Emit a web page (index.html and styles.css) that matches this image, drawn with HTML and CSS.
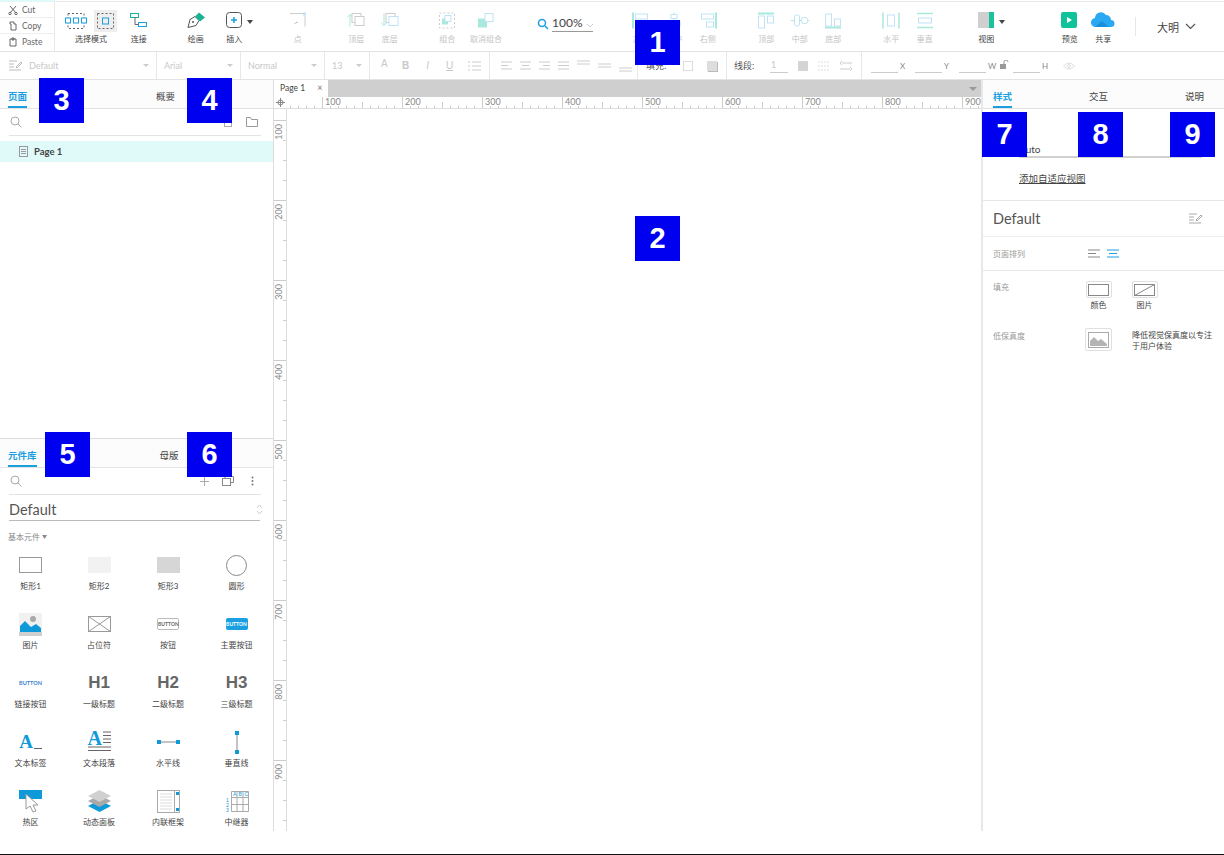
FILE: index.html
```html
<!DOCTYPE html>
<html lang="zh">
<head>
  <meta charset="UTF-8">
  <title>Axure RP</title>
  <link rel="stylesheet" href="styles.css">
</head>
<body>
<div class="app">

  <!-- main toolbar -->
  <div class="toolbar">
    <div class="clipboard">
      <div class="clip-row"><svg width="10" height="10" viewBox="0 0 10 10"><path d="M2 1l6 7M8 1L2 8" stroke="#666" fill="none"/><circle cx="2" cy="8.500" r="1.200" fill="none" stroke="#666"/><circle cx="8" cy="8.500" r="1.200" fill="none" stroke="#666"/></svg>Cut</div>
      <div class="clip-row"><svg width="10" height="10" viewBox="0 0 10 10"><path d="M2 1h4v2h2v6H3V3H2z" fill="none" stroke="#666"/></svg>Copy</div>
      <div class="clip-row"><svg width="10" height="10" viewBox="0 0 10 10"><path d="M2 2h6v7H2zM4 1h2v2H4z" fill="none" stroke="#666"/></svg>Paste</div>
    </div>

    <div class="tool tool-select">
      <div class="select-icons">
        <svg width="22" height="16" viewBox="0 0 22 16"><rect x="3" y="0.500" width="16" height="15" fill="none" stroke="#666" stroke-dasharray="2 2"/><g fill="#fff" stroke="#1a9fe0"><rect x="0.500" y="5" width="5" height="5"/><rect x="8.500" y="5" width="5" height="5"/><rect x="16.500" y="5" width="5" height="5"/></g></svg>
        <div class="select-on"><svg width="17" height="16" viewBox="0 0 17 16"><rect x="0.500" y="0.500" width="16" height="15" fill="none" stroke="#666" stroke-dasharray="2 2"/><rect x="5.500" y="5" width="6" height="6" fill="none" stroke="#1a9fe0"/></svg></div>
      </div>
      <span class="tool-label">选择模式</span>
    </div>
    <div class="tool tool-connect">
      <svg width="18" height="16" viewBox="0 0 18 16"><rect x="0.500" y="1" width="8" height="4" fill="none" stroke="#19b394"/><rect x="8.500" y="10" width="8" height="4" fill="none" stroke="#1a9fe0"/><path d="M5 5v7h3" fill="none" stroke="#666"/></svg>
      <span class="tool-label">连接</span>
    </div>

    <div class="tool tool-draw">
      <svg width="18" height="16" viewBox="0 0 18 16"><path d="M1 15l2-8 5-3 4 4-3 5z" fill="#fff" stroke="#555"/><path d="M8 4l4-4 6 5-5 4z" fill="#19b394"/><circle cx="6" cy="9.500" r="1" fill="#555"/></svg>
      <span class="tool-label">绘画</span>
    </div>
    <div class="tool tool-insert">
      <div class="insert-icon">
        <svg width="17" height="17" viewBox="0 0 17 17"><rect x="0.500" y="0.500" width="15" height="15" rx="3" fill="none" stroke="#555"/><path d="M8 5v6M5 8h6" stroke="#1a9fe0" stroke-width="1.500"/></svg>
        <i class="caret"></i>
      </div>
      <span class="tool-label">插入</span>
    </div>

    <div class="tool off tool-point">
      <svg width="18" height="16" viewBox="0 0 18 16"><path d="M1 1h13M16 3v11" stroke="#ccc" fill="none"/><rect x="14" y="0" width="3" height="3" fill="#bfe3f5"/><path d="M4 12l5-2-1-1z" fill="#bbb"/></svg>
      <span class="tool-label">点</span>
    </div>

    <div class="tool off tool-first">
      <svg width="18" height="16" viewBox="0 0 18 16"><path d="M3 14V2M0 5l3-3 3 3" fill="none" stroke="#a9e9dc"/><rect x="5" y="1" width="9" height="9" fill="#fff" stroke="#ccc"/><rect x="8" y="4" width="9" height="9" fill="#fff" stroke="#ccc"/></svg>
      <span class="tool-label">顶层</span>
    </div>
    <div class="tool off">
      <svg width="18" height="16" viewBox="0 0 18 16"><rect x="5" y="1" width="9" height="9" fill="#fff" stroke="#ccc"/><rect x="8" y="4" width="9" height="9" fill="#fff" stroke="#bfe3f5"/><path d="M3 1v12M0 10l3 3 3-3" fill="none" stroke="#a9e9dc"/></svg>
      <span class="tool-label">底层</span>
    </div>

    <div class="tool off tool-group">
      <svg width="16" height="16" viewBox="0 0 16 16"><rect x="0.500" y="0.500" width="15" height="15" fill="none" stroke="#ccc" stroke-dasharray="2 2"/><rect x="3" y="6" width="6" height="6" fill="#a9e9dc"/><rect x="6" y="3" width="6" height="6" fill="#fff" stroke="#bfe3f5"/></svg>
      <span class="tool-label">组合</span>
    </div>
    <div class="tool off tool-wide">
      <svg width="16" height="16" viewBox="0 0 16 16"><rect x="0" y="6" width="9" height="9" fill="#a9e9dc"/><rect x="7" y="1" width="8" height="8" fill="#fff" stroke="#bfe3f5"/></svg>
      <span class="tool-label">取消组合</span>
    </div>

    <div class="zoom-box">
      <svg width="12" height="12" viewBox="0 0 12 12"><circle cx="5" cy="5" r="3.500" fill="none" stroke="#1a9fe0" stroke-width="1.500"/><path d="M8 8l3 3" stroke="#1a9fe0" stroke-width="1.500"/></svg>
      <div class="zoom-value">100%</div>
      <svg width="8" height="5" viewBox="0 0 8 5"><path d="M1 1l3 3 3-3" fill="none" stroke="#ccc"/></svg>
    </div>

    <div class="tool off tool-align-l">
      <svg width="18" height="16" viewBox="0 0 18 16"><path d="M1 0v16" stroke="#a9e9dc" stroke-width="2"/><rect x="3.500" y="1.500" width="12" height="5" fill="none" stroke="#bfe3f5"/><rect x="3.500" y="9.500" width="7" height="5" fill="none" stroke="#bfe3f5"/></svg>
      <span class="tool-label">左侧</span>
    </div>
    <div class="tool off">
      <svg width="18" height="16" viewBox="0 0 18 16"><path d="M9 0v16" stroke="#a9e9dc"/><rect x="6" y="2" width="6" height="4" fill="#fff" stroke="#bfe3f5"/><rect x="3" y="9" width="12" height="5" fill="#fff" stroke="#bfe3f5"/></svg>
      <span class="tool-label">居中</span>
    </div>
    <div class="tool off">
      <svg width="18" height="16" viewBox="0 0 18 16"><path d="M17 0v16" stroke="#a9e9dc" stroke-width="2"/><rect x="2.500" y="1.500" width="12" height="5" fill="none" stroke="#bfe3f5"/><rect x="7.500" y="9.500" width="7" height="5" fill="none" stroke="#bfe3f5"/></svg>
      <span class="tool-label">右侧</span>
    </div>

    <div class="tool off tool-align-t">
      <svg width="18" height="16" viewBox="0 0 18 16"><path d="M1 1h16" stroke="#a9e9dc" stroke-width="2"/><rect x="1.500" y="3.500" width="6" height="12" fill="none" stroke="#bfe3f5"/><rect x="10.500" y="3.500" width="6" height="7" fill="none" stroke="#bfe3f5"/></svg>
      <span class="tool-label">顶部</span>
    </div>
    <div class="tool off">
      <svg width="18" height="16" viewBox="0 0 18 16"><path d="M0 8h18" stroke="#a9e9dc"/><rect x="3.500" y="2.500" width="5" height="11" rx="2" fill="#fff" stroke="#bfe3f5"/><rect x="10.500" y="5" width="6" height="6" rx="2" fill="#fff" stroke="#bfe3f5"/></svg>
      <span class="tool-label">中部</span>
    </div>
    <div class="tool off">
      <svg width="18" height="16" viewBox="0 0 18 16"><path d="M1 15h16" stroke="#a9e9dc" stroke-width="2"/><rect x="1.500" y="1.500" width="6" height="12" fill="none" stroke="#bfe3f5"/><rect x="10.500" y="6.500" width="6" height="7" fill="none" stroke="#bfe3f5"/></svg>
      <span class="tool-label">底部</span>
    </div>

    <div class="tool off tool-dist">
      <svg width="18" height="16" viewBox="0 0 18 16"><path d="M1 0v16M17 0v16" stroke="#a9e9dc" stroke-width="1.500"/><rect x="5.500" y="2.500" width="7" height="11" fill="none" stroke="#bfe3f5"/></svg>
      <span class="tool-label">水平</span>
    </div>
    <div class="tool off">
      <svg width="18" height="16" viewBox="0 0 18 16"><path d="M1 1h16M1 15h16" stroke="#a9e9dc" stroke-width="1.500"/><rect x="2.500" y="5.500" width="13" height="5" fill="none" stroke="#bfe3f5"/></svg>
      <span class="tool-label">垂直</span>
    </div>

    <div class="tool tool-view">
      <div class="insert-icon">
        <svg width="17" height="16" viewBox="0 0 17 16"><rect width="11" height="16" fill="#cfcfcf"/><rect x="11" width="5" height="16" fill="#19c29b"/></svg>
        <i class="caret"></i>
      </div>
      <span class="tool-label">视图</span>
    </div>

    <div class="tool tool-preview">
      <svg width="17" height="17" viewBox="0 0 17 17"><rect width="16" height="16" rx="2" fill="#0fc29a"/><path d="M6 5l5 3-5 3z" fill="#fff"/></svg>
      <span class="tool-label">预览</span>
    </div>
    <div class="tool">
      <svg width="24" height="17" viewBox="0 0 24 17"><path d="M5 15a4.500 4.500 0 0 1-1-9 6 6 0 0 1 11-3 5 5 0 0 1 5 5 3.500 3.500 0 0 1 0 7z" fill="#2aa9f2"/><path d="M4 15l7-6 7 6z" fill="#1a8fdc"/></svg>
      <span class="tool-label">共享</span>
    </div>

    <div class="user-box">
      <span>大明</span>
      <svg width="11" height="7" viewBox="0 0 11 7"><path d="M1 1l4.500 4.500L10 1" fill="none" stroke="#555" stroke-width="1.200"/></svg>
    </div>
  </div>

  <!-- format bar -->
  <div class="formatbar">
    <div class="fmt fmt-style">
      <svg width="13" height="11" viewBox="0 0 13 11"><path d="M0 1h8M0 4h5M0 7h5M0 10h12M7 7l5-5 1 1-5 5z" fill="none" stroke="#bbb"/></svg>
      <span class="fmt-text">Default</span><i class="mini-caret"></i>
    </div>
    <div class="fmt fmt-font"><span class="fmt-text">Arial</span><i class="mini-caret"></i></div>
    <div class="fmt fmt-weight"><span class="fmt-text">Normal</span><i class="mini-caret"></i></div>
    <div class="fmt fmt-size"><span class="fmt-text">13</span><i class="mini-caret"></i></div>
    <div class="fmt fmt-letters">
      <span>A</span><b>B</b><em>I</em><u>U</u>
      <svg width="13" height="10" viewBox="0 0 13 10"><path d="M0 1h2M4 1h9M0 5h2M4 5h9M0 9h2M4 9h9" stroke="#ccc"/></svg>
    </div>
    <div class="fmt fmt-aligns">
      <svg width="11" height="9" viewBox="0 0 11 9"><path d="M0 1h11M0 4.500h7M0 8h11" stroke="#ccc"/></svg>
      <svg width="11" height="9" viewBox="0 0 11 9"><path d="M0 1h11M2 4.500h7M0 8h11" stroke="#ccc"/></svg>
      <svg width="11" height="9" viewBox="0 0 11 9"><path d="M0 1h11M4 4.500h7M0 8h11" stroke="#ccc"/></svg>
      <svg width="11" height="9" viewBox="0 0 11 9"><path d="M0 1h11M0 4.500h11M0 8h11" stroke="#ccc"/></svg>
      <svg class="valign-t" width="13" height="5" viewBox="0 0 13 5"><path d="M0 1h13M0 4h13" stroke="#ccc"/></svg>
      <svg width="13" height="5" viewBox="0 0 13 5"><path d="M0 1h13M0 4h13" stroke="#ccc"/></svg>
      <svg class="valign-b" width="13" height="5" viewBox="0 0 13 5"><path d="M0 1h13M0 4h13" stroke="#ccc"/></svg>
    </div>
    <div class="fmt fmt-fill">
      <span class="fmt-label">填充:</span>
      <i class="swatch"></i>
      <i class="swatch swatch-shadow"></i>
    </div>
    <div class="fmt fmt-line">
      <span class="fmt-label">线段:</span>
      <span class="line-value">1</span>
      <i class="swatch swatch-solid"></i>
      <svg width="12" height="10" viewBox="0 0 12 10"><path d="M0 1h12M0 5h12M0 9h12" stroke="#ddd" stroke-dasharray="2 1"/></svg>
      <svg width="12" height="10" viewBox="0 0 12 10"><path d="M2 2h10M0 2l2-2M0 2l2 2M0 8h10M12 8l-2-2M12 8l-2 2" fill="none" stroke="#ccc"/></svg>
    </div>
    <div class="fmt fmt-pos">
      <span class="pos-line"></span><span class="pos-key">X</span>
      <span class="pos-line"></span><span class="pos-key">Y</span>
      <span class="pos-line"></span><span class="pos-key pos-key-w">W</span>
      <svg class="lock" width="9" height="9" viewBox="0 0 9 9"><rect y="4" width="6" height="5" fill="#999"/><path d="M4 4V2a2 2 0 0 1 4 0" fill="none" stroke="#999"/></svg>
      <span class="pos-line"></span><span class="pos-key pos-key-h">H</span>
      <svg class="eye" width="12" height="8" viewBox="0 0 12 8"><path d="M0.500 4Q6-2 11.500 4 6 10 0.500 4z" fill="none" stroke="#ddd"/><circle cx="6" cy="4" r="1.500" fill="none" stroke="#ddd"/></svg>
    </div>
  </div>

  <div class="main">

    <!-- left column -->
    <div class="left">
      <div class="pages">
        <div class="tabs">
          <span class="tab active">页面</span>
          <span class="tab tab-outline">概要</span>
        </div>
        <div class="search-row">
          <svg width="12" height="12" viewBox="0 0 12 12"><circle cx="5" cy="5" r="4" fill="none" stroke="#aaa"/><path d="M8 8l3.500 3.500" stroke="#aaa"/></svg>
          <span class="search-space"></span>
          <svg width="8" height="12" viewBox="0 0 8 12"><rect x="0.500" y="1.500" width="7" height="9" fill="none" stroke="#aaa"/></svg>
          <svg class="folder" width="12" height="10" viewBox="0 0 12 10"><path d="M0.500 9.500V0.500h4l1 2h6v7z" fill="none" stroke="#999"/></svg>
        </div>
        <div class="page-row">
          <svg width="9" height="11" viewBox="0 0 9 11"><rect x="0.500" y="0.500" width="8" height="10" fill="none" stroke="#999"/><path d="M2 3.500h5M2 5.500h5M2 7.500h5" stroke="#999"/></svg>
          Page 1
        </div>
      </div>

      <div class="library">
        <div class="tabs">
          <span class="tab active">元件库</span>
          <span class="tab tab-masters">母版</span>
        </div>
        <div class="search-row search-lib">
          <svg width="12" height="12" viewBox="0 0 12 12"><circle cx="5" cy="5" r="4" fill="none" stroke="#aaa"/><path d="M8 8l3.500 3.500" stroke="#aaa"/></svg>
          <span class="search-space"></span>
          <svg width="9" height="9" viewBox="0 0 9 9"><path d="M4.500 0v9M0 4.500h9" stroke="#aaa"/></svg>
          <svg class="lib-copy" width="12" height="10" viewBox="0 0 12 10"><rect x="0.500" y="2.500" width="8" height="7" fill="#fff" stroke="#888"/><path d="M3 2.500v-2h8.500v6h-3" fill="none" stroke="#888"/></svg>
          <svg class="lib-more" width="3" height="10" viewBox="0 0 3 10"><circle cx="1.500" cy="1.500" r="1" fill="#777"/><circle cx="1.500" cy="5" r="1" fill="#777"/><circle cx="1.500" cy="8.500" r="1" fill="#777"/></svg>
        </div>
        <div class="lib-select">
          <span>Default</span>
          <svg width="7" height="13" viewBox="0 0 7 13"><path d="M1 5l2.500-3L6 5M1 8l2.500 3L6 8" fill="none" stroke="#ccc"/></svg>
        </div>
        <div class="lib-section">基本元件 <i>▼</i></div>
        <div class="widgets">
          <div class="widget"><div class="w-icon"><span class="rect-a"></span></div><span>矩形1</span></div>
          <div class="widget"><div class="w-icon"><span class="rect-b"></span></div><span>矩形2</span></div>
          <div class="widget"><div class="w-icon"><span class="rect-c"></span></div><span>矩形3</span></div>
          <div class="widget"><div class="w-icon"><span class="circle"></span></div><span>圆形</span></div>

          <div class="widget"><div class="w-icon">
            <svg width="23" height="23" viewBox="0 0 23 23"><rect width="23" height="23" fill="#f1f1f1"/><circle cx="14" cy="6" r="3" fill="#aaa"/><path d="M1 19v-6l5-5 6 6 5-3 5 4v4z" fill="#0e9ad9"/><rect y="19" width="23" height="4" fill="#d0d0d0"/></svg>
          </div><span>图片</span></div>
          <div class="widget"><div class="w-icon">
            <svg width="23" height="16" viewBox="0 0 23 16"><rect x="0.500" y="0.500" width="22" height="15" fill="none" stroke="#999"/><path d="M0.500 0.500l22 15M22.500 0.500l-22 15" stroke="#999"/></svg>
          </div><span>占位符</span></div>
          <div class="widget"><div class="w-icon"><span class="btn-a">BUTTON</span></div><span>按钮</span></div>
          <div class="widget"><div class="w-icon"><span class="btn-b">BUTTON</span></div><span>主要按钮</span></div>

          <div class="widget"><div class="w-icon"><span class="btn-c">BUTTON</span></div><span>链接按钮</span></div>
          <div class="widget"><div class="w-icon"><span class="w-head">H1</span></div><span>一级标题</span></div>
          <div class="widget"><div class="w-icon"><span class="w-head">H2</span></div><span>二级标题</span></div>
          <div class="widget"><div class="w-icon"><span class="w-head">H3</span></div><span>三级标题</span></div>

          <div class="widget"><div class="w-icon"><span class="w-label">A<i></i></span></div><span>文本标签</span></div>
          <div class="widget"><div class="w-icon"><div class="w-para"><b>A</b><svg width="23" height="23" viewBox="0 0 23 23"><path d="M15 1h8M15 4.500h8M15 8h8M15 11.500h8M0 16h23M0 19.500h23" stroke="#666" stroke-width="1.200"/></svg></div></div><span>文本段落</span></div>
          <div class="widget"><div class="w-icon">
            <svg width="23" height="6" viewBox="0 0 23 6"><path d="M3 3h18" stroke="#888"/><rect width="4" height="4" y="1" fill="#0e9ad9"/><rect x="19" y="1" width="4" height="4" fill="#0e9ad9"/></svg>
          </div><span>水平线</span></div>
          <div class="widget"><div class="w-icon">
            <svg width="6" height="23" viewBox="0 0 6 23"><path d="M3 3v18" stroke="#888"/><rect x="1" width="4" height="4" fill="#0e9ad9"/><rect x="1" y="19" width="4" height="4" fill="#0e9ad9"/></svg>
          </div><span>垂直线</span></div>

          <div class="widget"><div class="w-icon">
            <svg width="23" height="23" viewBox="0 0 23 23"><rect width="23" height="9" fill="#0e9ad9"/><path d="M7 4v15l4-3 3 6 3-1-3-6h5z" fill="#fff" stroke="#999"/></svg>
          </div><span>热区</span></div>
          <div class="widget"><div class="w-icon">
            <svg width="23" height="23" viewBox="0 0 23 23"><path d="M0 16l11.500-6L23 16l-11.500 6z" fill="#0e9ad9"/><path d="M0 11l11.500-6L23 11l-11.500 6z" fill="#a8a8a8"/><path d="M0 6l11.500-6L23 6l-11.500 6z" fill="#d0d0d0"/></svg>
          </div><span>动态面板</span></div>
          <div class="widget"><div class="w-icon">
            <svg width="23" height="23" viewBox="0 0 23 23"><rect x="0.500" y="0.500" width="22" height="22" fill="#fff" stroke="#aaa"/><path d="M3 4h12M3 7h12M3 10h12M3 13h12M3 16h12M3 19h12" stroke="#ddd"/><path d="M17.500 0.500v22" stroke="#aaa"/><rect x="19" y="2" width="3" height="3" fill="#0e9ad9"/><rect x="19" y="18" width="3" height="3" fill="#0e9ad9"/></svg>
          </div><span>内联框架</span></div>
          <div class="widget"><div class="w-icon">
            <svg width="24" height="23" viewBox="0 0 24 23"><path d="M6.500 1.500h17v20h-17zM6.500 7.500h17M6.500 14.500h17M12 1.500v20M18 1.500v20" fill="none" stroke="#aaa"/><g font-size="5" font-family="Liberation Sans" fill="#0e9ad9"><text x="8" y="6">A</text><text x="13.500" y="6">B</text><text x="19.500" y="6">C</text><text x="1" y="12">1</text><text x="1" y="17">2</text><text x="1" y="22">3</text></g></svg>
          </div><span>中继器</span></div>
        </div>
      </div>
    </div>

    <!-- canvas with rulers -->
    <div class="center">
      <div class="doc-tabs">
        <div class="doc-tab">Page 1 <span class="doc-close">×</span></div>
        <i class="doc-arrow"></i>
      </div>
      <div class="ruler-h">
        <div class="ruler-corner">
          <svg width="9" height="9" viewBox="0 0 9 9"><circle cx="4.500" cy="4.500" r="2.500" fill="none" stroke="#888"/><path d="M4.500 0v9M0 4.500h9" stroke="#888"/></svg>
        </div>
        <div class="ruler-h-track">
          <span>100</span><span>200</span><span>300</span><span>400</span><span>500</span><span>600</span><span>700</span><span>800</span><span>900</span>
        </div>
      </div>
      <div class="canvas-row">
        <div class="ruler-v">
          <span><b>100</b></span><span><b>200</b></span><span><b>300</b></span><span><b>400</b></span><span><b>500</b></span><span><b>600</b></span><span><b>700</b></span><span><b>800</b></span><span><b>900</b></span>
        </div>
        <div class="canvas"></div>
      </div>
    </div>

    <!-- right column -->
    <div class="right">
      <div class="tabs tabs-right">
        <span class="tab active">样式</span>
        <span class="tab">交互</span>
        <span class="tab">说明</span>
      </div>
      <div class="adaptive">
        <div class="adaptive-value">Auto</div>
        <a class="adaptive-link">添加自适应视图</a>
      </div>
      <div class="style-head">
        <span>Default</span>
        <svg width="13" height="11" viewBox="0 0 13 11"><path d="M0 1h8M0 4h5M0 7h5M0 10h12M7 7l5-5 1 1-5 5z" fill="none" stroke="#aaa"/></svg>
      </div>
      <div class="prop prop-arrange">
        <span class="prop-name">页面排列</span>
        <div class="arrange-icons">
          <svg width="12" height="9" viewBox="0 0 12 9"><path d="M0 1h12M0 4.500h8M0 8h12" stroke="#888"/></svg>
          <svg width="12" height="9" viewBox="0 0 12 9"><path d="M0 1h12M2 4.500h8M0 8h12" stroke="#1a9fe0"/></svg>
        </div>
      </div>
      <div class="prop-fill">
        <div class="fill-row">
          <span class="prop-name">填充</span>
          <div class="fill-opt">
            <div class="fill-box"><span></span></div>
            <small>颜色</small>
          </div>
          <div class="fill-opt">
            <div class="fill-box"><svg width="21" height="12" viewBox="0 0 21 12"><rect x="0.500" y="0.500" width="20" height="11" fill="none" stroke="#888"/><path d="M0.500 11.500l20-11" stroke="#888"/></svg></div>
            <small>图片</small>
          </div>
        </div>
        <div class="fill-row fidelity">
          <span class="prop-name">低保真度</span>
          <div class="fid-box"><svg width="21" height="16" viewBox="0 0 21 16"><rect x="0.500" y="0.500" width="20" height="15" fill="#fff" stroke="#aaa"/><path d="M2 14V9l4-4 4 4 3-2 6 5v2z" fill="#b4b4b4"/></svg></div>
          <p>降低视觉保真度以专注于用户体验</p>
        </div>
      </div>
    </div>
  </div>

  <div class="statusbar"></div>

  <!-- numbered callouts -->
  <div class="badge b1">1</div>
  <div class="badge b2">2</div>
  <div class="badge b3">3</div>
  <div class="badge b4">4</div>
  <div class="badge b5">5</div>
  <div class="badge b6">6</div>
  <div class="badge b7">7</div>
  <div class="badge b8">8</div>
  <div class="badge b9">9</div>
</div>
</body>
</html>
```

FILE: styles.css
```css
* {
  box-sizing: border-box;
}

body {
  margin: 0;
  background: #fff;
  color: #444;
  font-family: "Lato", "Noto Sans CJK SC", sans-serif;
  font-size: 9px;
}

.app {
  position: relative;
  width: 1224px;
  height: 855px;
  display: flex;
  flex-direction: column;
  overflow: hidden;
}

svg {
  display: block;
  flex: none;
}

/* toolbar */
.toolbar {
  height: 52px;
  display: flex;
  border-bottom: 1px solid #e3e3e3;
  background: linear-gradient(#e8e8e8 0 1px, transparent 1px) no-repeat 48px 1px;
}

.clipboard {
  width: 55px;
  border-right: 1px solid #e8e8e8;
  margin-right: 5px;
  border-top: 2px solid #e0f9f9;
}

.clip-row {
  height: 16px;
  display: flex;
  align-items: center;
  gap: 4px;
  padding-left: 8px;
  border-bottom: 1px solid #eee;
  color: #666;
  font-size: 8.500px;
}

.clip-row:last-child {
  border-bottom: 0;
}

.tool {
  width: 33.500px;
  display: flex;
  flex-direction: column;
  align-items: center;
  padding-top: 12px;
  flex: none;
}

.insert-icon {
  height: 21px;
}

.tool > svg {
  margin-bottom: 4px;
  height: 17px;
}

.tool-label {
  font-size: 8px;
  line-height: 12px;
  white-space: nowrap;
  color: #444;
}

.off .tool-label {
  color: #c4c4c4;
}

.tool-select {
  width: 62px;
  padding-top: 9px;
}

.select-icons {
  display: flex;
  align-items: center;
  gap: 7px;
  height: 24px;
}

.select-on {
  width: 23px;
  height: 22px;
  background: #eee;
  display: flex;
  align-items: center;
  justify-content: center;
}

.tool-draw {
  margin-left: 23.500px;
}

.tool-insert {
  margin-left: 5px;
}

.insert-icon {
  display: flex;
  gap: 4px;
  margin-left: 11px;
}

.caret {
  width: 0;
  height: 0;
  margin-top: 8px;
  border: 3px solid transparent;
  border-top: 4px solid #444;
  border-bottom: 0;
}

.tool-point {
  margin-left: 30px;
}

.tool-first {
  margin-left: 25px;
}

.tool-group {
  margin-left: 24px;
}

.tool-wide {
  width: 44px;
}

.zoom-box {
  width: 64px;
  margin-left: 29px;
  padding-top: 14px;
  display: flex;
  align-items: flex-start;
  gap: 3px;
  height: 32px;
}

.zoom-box svg:first-child {
  margin-top: 4px;
}

.zoom-box svg:last-child {
  margin: 9px 0 0 -10px;
}

.zoom-value {
  width: 41px;
  font-size: 12px;
  line-height: 17px;
  border-bottom: 1px solid #999;
}

.tool-align-l {
  margin-left: 23px;
}

.tool-align-t {
  margin-left: 25px;
}

.tool-dist {
  margin-left: 24.500px;
}

.tool-view {
  margin-left: 28px;
}

.tool-preview {
  margin-left: 50px;
}

.user-box {
  margin-left: 15px;
  margin-top: 17px;
  height: 19px;
  width: 66px;
  border-left: 1px solid #e6e6e6;
  padding-left: 21px;
  display: flex;
  align-items: center;
  gap: 6px;
  font-size: 11px;
}

/* format bar */
.formatbar {
  height: 28px;
  display: flex;
  border-bottom: 1px solid #e3e3e3;
  color: #c8c8c8;
}

.fmt {
  height: 27px;
  display: flex;
  align-items: center;
  border-right: 1px solid #e8e8e8;
  flex: none;
  position: relative;
  font-size: 9px;
}

.fmt-style {
  width: 157px;
  padding-left: 9px;
}

.fmt-text {
  flex: 1;
}

.fmt-style .fmt-text {
  margin-left: 7px;
}

.fmt-font {
  width: 84px;
  padding-left: 7px;
}

.fmt-weight {
  width: 84px;
  padding-left: 7px;
}

.fmt-size {
  width: 45px;
  padding-left: 7px;
}

.mini-caret {
  width: 0;
  height: 0;
  margin-right: 7px;
  border: 3px solid transparent;
  border-top: 3px solid #ccc;
  border-bottom: 0;
}

.fmt-letters {
  width: 120px;
  padding-left: 11px;
  gap: 14px;
  font-family: "Liberation Sans", sans-serif;
  font-size: 10px;
}

.fmt-letters span {
  margin-top: -4px;
}

.fmt-letters b,
.fmt-letters em,
.fmt-letters u {
  width: 8px;
  text-align: center;
}

.fmt-aligns {
  width: 148px;
  padding-left: 11px;
  gap: 8px;
}

.valign-t {
  margin-top: -7px;
}

.valign-b {
  margin-top: 7px;
}

.fmt-fill {
  width: 89px;
  padding-left: 8px;
  gap: 14px;
}

.fmt-label {
  color: #555;
  width: 24px;
  margin-right: -1px;
}

.swatch {
  width: 10px;
  height: 10px;
  border: 1px solid #ddd;
}

.swatch-shadow {
  background: #ddd;
  box-shadow: 1px 1px 0 #bbb;
}

.swatch-solid {
  background: #d4d4d4;
  border: 0;
  margin: 0 10px;
}

.fmt-line {
  width: 135px;
  padding-left: 7px;
}

.line-value {
  width: 18px;
  margin-left: 13px;
  padding-left: 1px;
  line-height: 14px;
  border-bottom: 1px solid #ccc;
}

.fmt-line svg:last-child {
  margin-left: 10px;
}

.fmt-pos {
  border-right: 0;
  flex: 1;
  padding-left: 9px;
}

.pos-line {
  width: 27px;
  height: 14px;
  border-bottom: 1px solid #ccc;
}

.pos-key {
  width: 17px;
  padding-left: 2px;
  font-size: 8px;
  color: #888;
}

.pos-key-w {
  width: 12px;
}

.lock {
  margin: -3px 4px 0 2px;
}

.eye {
  margin-left: 6px;
}

/* panels */
.main {
  height: 751px;
  display: flex;
}

.left {
  width: 274px;
  display: flex;
  flex-direction: column;
  border-right: 1px solid #ddd;
  flex: none;
}

.pages {
  height: 358px;
}

.tabs {
  position: relative;
  height: 29px;
  display: flex;
  border-bottom: 1px solid #e3e3e3;
  background: #fcfcfc;
  padding-left: 8px;
  font-size: 9.500px;
}

.tab {
  height: 28px;
  line-height: 34px;
  color: #444;
}

.tab.active {
  color: #1a9fe0;
  font-weight: 700;
  border-bottom: 2px solid #1a9fe0;
}

.tab-outline {
  margin-left: 129px;
}

.tab-masters {
  margin-left: 123px;
}

.search-row {
  height: 27px;
  margin: 0 12px 0 9px;
  display: flex;
  align-items: center;
  border-bottom: 1px solid #e3e3e3;
  padding: 0 3px 0 1px;
}

.search-space {
  flex: 1;
}

.folder {
  margin-left: 14px;
}

.lib-copy {
  margin-left: 13px;
}

.lib-more {
  margin: 0 4px 0 17px;
}

.page-row {
  height: 21px;
  margin-top: 5px;
  background: #e0f9f9;
  display: flex;
  align-items: center;
  gap: 6px;
  padding-left: 19px;
  font-size: 9.500px;
  font-weight: 700;
  color: #444;
}

.library {
  flex: 1;
  border-top: 1px solid #ddd;
  overflow: hidden;
}

.lib-select {
  height: 22px;
  margin: 4px 13px 0 9px;
  display: flex;
  align-items: center;
  justify-content: space-between;
  border-bottom: 1px solid #bbb;
  font-size: 14.500px;
  color: #555;
}

.lib-select svg {
  margin-right: -3px;
}

.lib-section {
  margin: 9px 0 0 8px;
  color: #888;
  font-size: 8px;
  line-height: 12px;
}

.lib-section i {
  font-style: normal;
  font-size: 5px;
  vertical-align: 2px;
}

.widgets {
  display: grid;
  grid-template-columns: 68px 69px 69px 68px;
  grid-auto-rows: 59px;
  margin: 7px 0 0 -3.500px;
}

.widget {
  display: flex;
  flex-direction: column;
  align-items: center;
}

.widget > span {
  font-size: 8px;
  line-height: 12px;
  color: #444;
  white-space: nowrap;
}

.w-icon {
  height: 30px;
  display: flex;
  align-items: center;
  justify-content: center;
}

.rect-a {
  width: 23px;
  height: 16px;
  border: 1px solid #999;
}

.rect-b {
  width: 23px;
  height: 16px;
  background: #f2f2f2;
}

.rect-c {
  width: 23px;
  height: 16px;
  background: #d6d6d6;
}

.circle {
  width: 21px;
  height: 21px;
  border: 1px solid #888;
  border-radius: 50%;
}

.btn-a,
.btn-b {
  width: 22px;
  height: 12px;
  font-size: 5px;
  font-weight: 700;
  line-height: 11px;
  text-align: center;
  border-radius: 2px;
}

.btn-a {
  border: 1px solid #bbb;
  color: #666;
}

.btn-b {
  background: #1a9fe0;
  color: #fff;
  line-height: 12px;
}

.btn-c {
  font-size: 5.500px;
  font-weight: 700;
  color: #3b7fd0;
}

.w-head {
  font-family: "Liberation Sans", sans-serif;
  font-size: 17px;
  font-weight: 700;
  color: #666;
}

.w-label {
  display: flex;
  align-items: flex-end;
  font-family: "Liberation Serif", serif;
  font-size: 19px;
  font-weight: 700;
  line-height: 18px;
  color: #0e9ad9;
}

.w-label i {
  width: 8px;
  height: 1px;
  margin: 0 0 2px 1px;
  background: #666;
}

.w-para {
  position: relative;
  width: 23px;
  height: 23px;
}

.w-para b {
  position: absolute;
  left: 0;
  top: -3px;
  font-family: "Liberation Serif", serif;
  font-size: 20px;
  line-height: 20px;
  color: #0e9ad9;
}

.center {
  width: 707px;
  display: flex;
  flex-direction: column;
  flex: none;
}

.doc-tabs {
  height: 17px;
  background: #cfcfcf;
  display: flex;
  align-items: center;
  justify-content: space-between;
  padding-right: 4px;
}

.doc-tab {
  width: 54px;
  height: 17px;
  background: #fff;
  padding-left: 6px;
  font-size: 8.500px;
  line-height: 16px;
  color: #444;
  white-space: nowrap;
}

.doc-close {
  margin-left: 10px;
  color: #777;
  font-size: 9px;
}

.doc-arrow {
  width: 0;
  height: 0;
  border: 4px solid transparent;
  border-top: 4px solid #999;
  border-bottom: 0;
}

.ruler-h {
  height: 12px;
  display: flex;
  border-bottom: 1px solid #ddd;
}

.ruler-corner {
  width: 13px;
  display: flex;
  align-items: center;
  justify-content: center;
  flex: none;
}

.ruler-h-track {
  flex: 1;
  display: flex;
  padding-left: 35px;
  overflow: hidden;
  background-image:
    repeating-linear-gradient(90deg, #ccc 0 1px, transparent 1px 80px),
    repeating-linear-gradient(90deg, #ccc 0 1px, transparent 1px 8px);
  background-size: calc(100% + 80px) 6px, calc(100% + 8px) 2px;
  background-position: -5px 100%, -5px 100%;
  background-repeat: no-repeat;
}

.ruler-h-track span {
  width: 80px;
  flex: none;
  border-left: 1px solid #ccc;
  padding-left: 2px;
  font-size: 9px;
  line-height: 10px;
  color: #888;
}

.canvas-row {
  flex: 1;
  display: flex;
  min-height: 0;
}

.ruler-v {
  width: 13px;
  flex: none;
  padding-top: 11px;
  overflow: hidden;
  border-right: 1px solid #ddd;
  background-image: repeating-linear-gradient(180deg, #ccc 0 1px, transparent 1px 20px);
  background-size: 3px calc(100% + 20px);
  background-repeat: no-repeat;
  background-position: 100% -9px;
}

.ruler-v span {
  display: block;
  height: 80px;
  width: 12px;
  border-top: 1px solid #ccc;
}

.ruler-v b {
  display: block;
  margin-top: 3px;
  writing-mode: vertical-rl;
  transform: rotate(180deg);
  font-weight: 400;
  font-size: 9px;
  line-height: 10px;
  color: #888;
}

.canvas {
  flex: 1;
  background: #fff;
}

/* right panel */
.right {
  flex: 1;
  border-left: 2px solid #e8e8e8;
  min-width: 0;
}

.tabs-right {
  justify-content: space-between;
  padding: 0 20px 0 10px;
}

.adaptive {
  height: 92px;
  border-bottom: 1px solid #e6e6e6;
  padding: 31px 0 0 36px;
}

.adaptive-value {
  width: 183px;
  height: 18px;
  border-bottom: 2px solid #d0d0d0;
  font-size: 10px;
  line-height: 19px;
  color: #444;
}

.adaptive-link {
  display: inline-block;
  margin-top: 13px;
  font-size: 9.500px;
  text-decoration: underline;
  color: #444;
}

.style-head {
  height: 36px;
  padding: 0 22px 0 10px;
  display: flex;
  align-items: center;
  justify-content: space-between;
  border-bottom: 1px solid #eee;
  font-size: 14.500px;
  color: #555;
}

.prop {
  height: 34px;
  border-bottom: 1px solid #e6e6e6;
  display: flex;
  align-items: center;
  padding-left: 10px;
}

.prop-name {
  width: 93px;
  flex: none;
  color: #999;
  font-size: 8px;
  line-height: 12px;
}

.arrange-icons {
  display: flex;
  gap: 7px;
  margin-left: 2px;
}

.prop-fill {
  padding: 10px 0 0 10px;
}

.fill-row {
  display: flex;
}

.fill-opt {
  width: 46px;
  display: flex;
  flex-direction: column;
  align-items: center;
  margin-left: -1px;
  margin-right: 1px;
}

.fill-opt small {
  margin-top: 1px;
  font-size: 8px;
  line-height: 12px;
  color: #444;
  margin-left: -19px;
}

.fill-box {
  width: 26px;
  height: 17px;
  margin-right: 19px;
  border: 1px solid #e0e0e0;
  border-radius: 2px;
  display: flex;
  align-items: center;
  justify-content: center;
}

.fill-box span {
  width: 21px;
  height: 12px;
  border: 1px solid #888;
}

.fidelity {
  margin-top: 19px;
}

.fid-box {
  width: 27px;
  height: 23px;
  margin-left: -1px;
  margin-top: -2px;
  border: 1px solid #e0e0e0;
  border-radius: 2px;
  display: flex;
  align-items: center;
  justify-content: center;
  flex: none;
}

.fidelity p {
  width: 82px;
  margin: 0 0 0 20px;
  font-size: 8px;
  line-height: 11px;
  color: #444;
}

.statusbar {
  flex: 1;
  background: linear-gradient(#111, #111) 0 100% / 100% 1px no-repeat;
}

/* callouts */
.badge {
  position: absolute;
  width: 45px;
  height: 45px;
  background: #0000f0;
  color: #fff;
  font-family: "Liberation Sans", sans-serif;
  font-size: 29px;
  font-weight: 700;
  line-height: 45px;
  text-align: center;
}

.b1 { left: 635px; top: 20px; }
.b2 { left: 635px; top: 216px; }
.b3 { left: 39px; top: 78px; }
.b4 { left: 187px; top: 78px; }
.b5 { left: 45px; top: 432px; }
.b6 { left: 187px; top: 432px; }
.b7 { left: 982px; top: 112px; }
.b8 { left: 1078px; top: 112px; }
.b9 { left: 1170px; top: 112px; }
```
